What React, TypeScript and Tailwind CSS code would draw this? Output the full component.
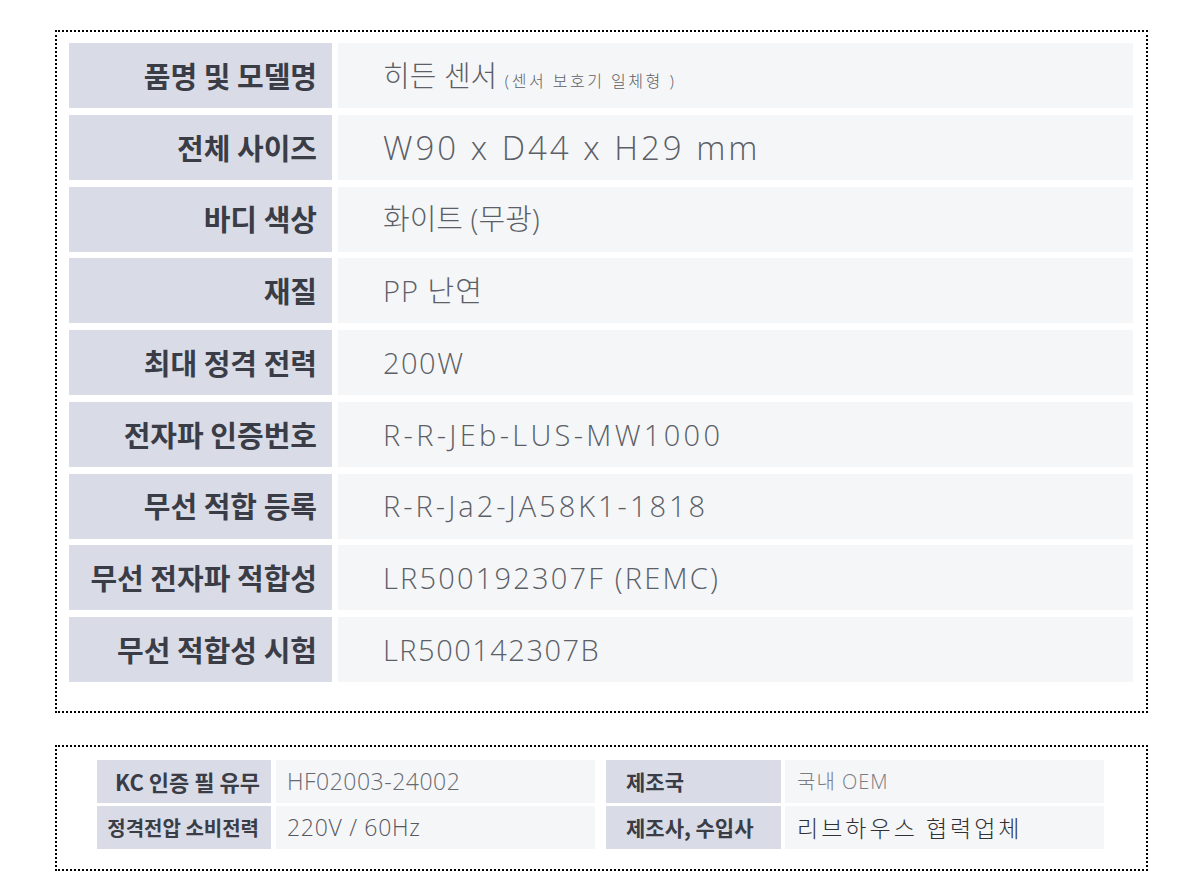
import { ReactNode } from "react";

const SANS = "font-['Noto_Sans_CJK_KR','Noto_Sans',sans-serif]";
const THIN = "font-['Open_Sans','Noto_Sans_CJK_KR',sans-serif] font-light";

interface SpecRow {
  label: string;
  value: ReactNode;
}

const specs: SpecRow[] = [
  {
    label: "품명 및 모델명",
    value: (
      <>
        히든 센서{" "}
        <span className="text-[16px] tracking-[2.5px]">(센서 보호기 일체형 )</span>
      </>
    ),
  },
  {
    label: "전체 사이즈",
    value: <span className="text-[33px] tracking-[3px]">W90 x D44 x H29 mm</span>,
  },
  { label: "바디 색상", value: "화이트 (무광)" },
  { label: "재질", value: <span className="tracking-[1px]">PP 난연</span> },
  { label: "최대 정격 전력", value: <span className="tracking-[1.5px]">200W</span> },
  { label: "전자파 인증번호", value: <span className="tracking-[3.3px]">R-R-JEb-LUS-MW1000</span> },
  { label: "무선 적합 등록", value: <span className="tracking-[3px]">R-R-Ja2-JA58K1-1818</span> },
  { label: "무선 전자파 적합성", value: <span className="tracking-[2.2px]">LR500192307F (REMC)</span> },
  { label: "무선 적합성 시험", value: <span className="tracking-[1.5px]">LR500142307B</span> },
];

export default function App() {
  return (
    <div className={`min-h-[892px] bg-white ${SANS}`}>
      <div className="ml-[55px] w-[1093px] pt-[30px]">
        {/* main spec table */}
        <div className="border-2 border-dotted border-black pt-[11px] pl-[12px] pr-[13px] pb-[29px]">
          <div className="flex flex-col gap-[6.75px]">
            {specs.map((row) => (
              <div key={row.label} className="flex h-[65px] gap-[6px]">
                <div className="flex w-[263px] shrink-0 items-center justify-end bg-[#d9dbe6] pr-[15px] text-[29px] font-bold text-[#3a3d46]">
                  {row.label}
                </div>
                <div className={`flex flex-1 items-center bg-[#f5f6f8] pl-[45px] text-[29px] text-[#5c5f67] ${THIN}`}>
                  <span>{row.value}</span>
                </div>
              </div>
            ))}
          </div>
        </div>

        {/* KC info */}
        <div className="mt-[32px] border-2 border-dotted border-black pt-[13px] pl-[40px] pr-[42px] pb-[20px]">
          <div className="flex flex-col gap-[3px]">
            <div className="flex h-[43px]">
              <div className="flex w-[174px] items-center justify-end bg-[#d9dbe6] pr-[11px] text-[22px] font-bold text-[#3a3d46]">
                KC 인증 필 유무
              </div>
              <div className={`ml-[5px] flex w-[319px] items-center bg-[#f5f6f8] pl-[11px] text-[23px] tracking-[0.5px] text-[#666971] ${THIN}`}>
                HF02003-24002
              </div>
              <div className="ml-[11px] flex w-[175px] items-center bg-[#d9dbe6] pl-[20px] text-[21px] font-bold text-[#3a3d46]">
                제조국
              </div>
              <div className={`ml-[4px] flex w-[319px] items-center bg-[#f5f6f8] pl-[12px] text-[20px] tracking-[1px] text-[#7a7d84] ${THIN}`}>
                국내 OEM
              </div>
            </div>

            <div className="flex h-[43px]">
              <div className="flex w-[174px] items-center justify-end bg-[#d9dbe6] pr-[12px] text-[20px] font-bold text-[#3a3d46]">
                정격전압 소비전력
              </div>
              <div className={`ml-[5px] flex w-[319px] items-center bg-[#f5f6f8] pl-[11px] text-[23px] tracking-[0.7px] text-[#55585f] ${THIN}`}>
                220V / 60Hz
              </div>
              <div className="ml-[11px] flex w-[175px] items-center bg-[#d9dbe6] pl-[20px] text-[21px] font-bold text-[#3a3d46]">
                제조사, 수입사
              </div>
              <div className="ml-[4px] flex w-[319px] items-center bg-[#f5f6f8] pl-[12px] text-[23px] font-light tracking-[3px] text-[#2f3136]">
                리브하우스 협력업체
              </div>
            </div>
          </div>
        </div>
      </div>
    </div>
  );
}
